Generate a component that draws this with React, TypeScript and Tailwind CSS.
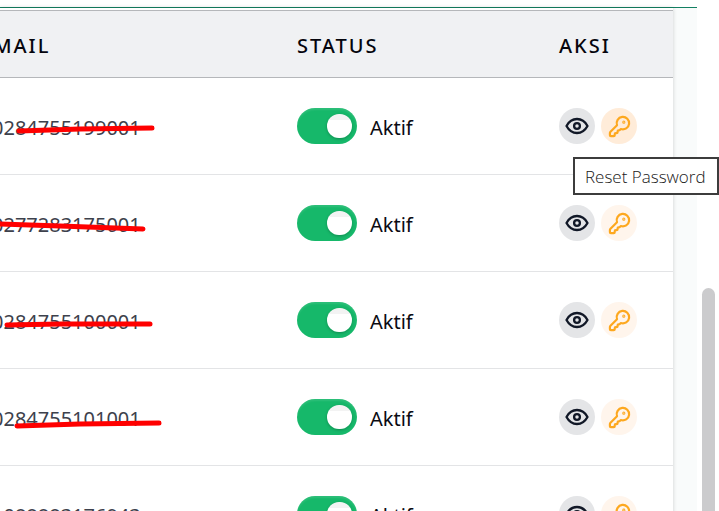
import React from 'react';
import { KeyRound } from 'lucide-react';

interface User {
  id: number;
  email: string;
  // Freehand line drawn over the email, in pixels of the cell
  mark?: string;
  resetHovered?: boolean;
}

const users: User[] = [
  { id: 1, email: '0284755199001', mark: 'M19 53 L80 51 L152 50', resetHovered: true },
  { id: 2, email: '0277283175001', mark: 'M-3 49 L60 51 L143 54' },
  { id: 3, email: '0284755100001', mark: 'M7 53 L60 52 L150 52' },
  { id: 4, email: '0284755101001', mark: 'M17 57 L80 55 L159 54' },
  { id: 5, email: '1088883176943' },
];

const EyeIcon: React.FC = () => (
  <svg
    width="28"
    height="28"
    viewBox="0 0 28 28"
    fill="none"
    stroke="currentColor"
    strokeWidth="2.3"
    strokeLinejoin="round"
    aria-hidden="true"
  >
    <path d="M3.5 14C6 9.4 9.6 7 14 7S22 9.4 24.5 14C22 18.6 18.4 21 14 21S6 18.6 3.5 14Z" />
    <circle cx="14" cy="14" r="2.9" />
  </svg>
);

const StatusSwitch: React.FC<{ id: number }> = ({ id }) => (
  <label htmlFor={`status-${id}`} className="flex items-center gap-[13px] text-xl text-[#0b0b12]">
    <span className="relative block h-9 w-[60px]">
      <input
        id={`status-${id}`}
        type="checkbox"
        role="switch"
        defaultChecked
        className="h-9 w-[60px] appearance-none rounded-full bg-gray-300 shadow-[inset_0_2px_2px_rgba(255,255,255,0.1)] checked:bg-[#16b86a]"
      />
      <span className="pointer-events-none absolute top-[6px] right-[5px] h-6 w-[25px] rounded-full bg-linear-to-b from-[#f3f3f3] from-25% to-white to-25% shadow-[0_1px_3px_rgba(0,0,0,0.25)]" />
    </span>
    <span className="pt-1">Aktif</span>
  </label>
);

const UserRow: React.FC<{ user: User }> = ({ user }) => (
  <tr className="h-[97px] border-b border-[#e3e4e6]">
    <td className="relative px-0 pt-1 pb-0">
      <span className="-ml-2 text-xl text-[#3d414c]">{user.email}</span>
      {user.mark && (
        <svg className="absolute top-0 left-0 h-24 w-44 overflow-visible" fill="none">
          <path d={user.mark} stroke="#ff0000" strokeWidth="5" strokeLinecap="round" strokeLinejoin="round" />
        </svg>
      )}
    </td>
    <td className="p-0">
      <StatusSwitch id={user.id} />
    </td>
    <td className="p-0">
      <div className="flex gap-[6px]">
        <button aria-label="Detail" className="flex size-9 items-center justify-center rounded-full bg-[#e4e5e7] text-[#111827]">
          <EyeIcon />
        </button>
        <div className="relative">
          <button
            aria-label="Reset Password"
            className={`flex size-9 items-center justify-center rounded-full text-[#fda81f] ${user.resetHovered ? 'bg-[#ffecd9]' : 'bg-[#fff5ec]'}`}
          >
            <KeyRound size={23} strokeWidth={2.3} />
          </button>
          {user.resetHovered && (
            <div
              role="tooltip"
              className="absolute top-[49px] -left-7 z-10 border-2 border-[#3c3c3c] bg-white pt-[6px] pr-[11px] pb-1 pl-[10px] font-['Open_Sans',sans-serif] text-[17px] leading-6 font-light whitespace-nowrap text-[#202020]"
            >
              Reset Password
            </div>
          )}
        </div>
      </div>
    </td>
  </tr>
);

export default function App() {
  return (
    <div className="flex h-screen overflow-hidden bg-white font-['Noto_Sans',sans-serif]">
      <main className="min-w-0 flex-1 bg-[#f9fbfb]">
        <div className="h-2 border-b border-[#138062] bg-white" />
        <div className="mr-6 bg-white pt-[2px] shadow-[0_0_4px_rgba(0,0,0,0.18)]">
          <table className="w-full table-fixed border-collapse text-left">
            <colgroup>
              <col className="w-[297px]" />
              <col />
              <col className="w-[114px]" />
            </colgroup>
            <thead>
              <tr className="h-[67px] border-y border-[#b5b7ba] bg-[#f0f1f3] text-xl tracking-[2px] text-[#05050d]">
                <th className="px-0 pt-1 pb-0 font-medium">
                  <span className="-ml-5">EMAIL</span>
                </th>
                <th className="px-0 pt-1 pb-0 font-medium">STATUS</th>
                <th className="px-0 pt-1 pb-0 font-medium">AKSI</th>
              </tr>
            </thead>
            <tbody>
              {users.map((user) => (
                <UserRow key={user.id} user={user} />
              ))}
            </tbody>
          </table>
        </div>
      </main>
      <div className="flex w-[22px] shrink-0 flex-col pr-1 pl-[5px] pt-72">
        <div className="flex-1 rounded-t-full bg-[#cbcbcd]" />
      </div>
    </div>
  );
}
